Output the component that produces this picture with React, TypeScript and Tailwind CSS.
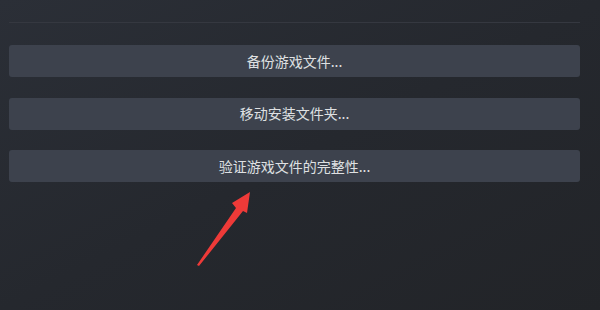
export default function App() {
  const items = ["备份游戏文件...", "移动安装文件夹...", "验证游戏文件的完整性..."];
  return (
    <div
      className="relative w-[600px] h-[310px] overflow-hidden bg-gradient-to-br from-[#2b2f37] via-[#25282e] to-[#222428] px-[9px] pt-[22px]"
      style={{ fontFamily: '"Noto Sans CJK SC", "Noto Sans", sans-serif' }}
    >
      <div className="w-[571px] h-px bg-[#353840]" />
      <div className="mt-[22px] flex w-[571px] flex-col gap-[20.5px]">
        {items.map((t) => (
          <button
            key={t}
            type="button"
            className="h-[32px] w-full rounded-[3px] bg-[#3d424d] text-[14px] text-[#dfe0e2]"
          >
            {t}
          </button>
        ))}
      </div>
      <svg className="absolute left-0 top-0" width="600" height="310" viewBox="0 0 600 310">
        <path d="M197 265 L236 208 L232 203 L250 192 L247 213 L243 211 L199 266 Z" fill="#ee3a38" />
      </svg>
    </div>
  );
}
